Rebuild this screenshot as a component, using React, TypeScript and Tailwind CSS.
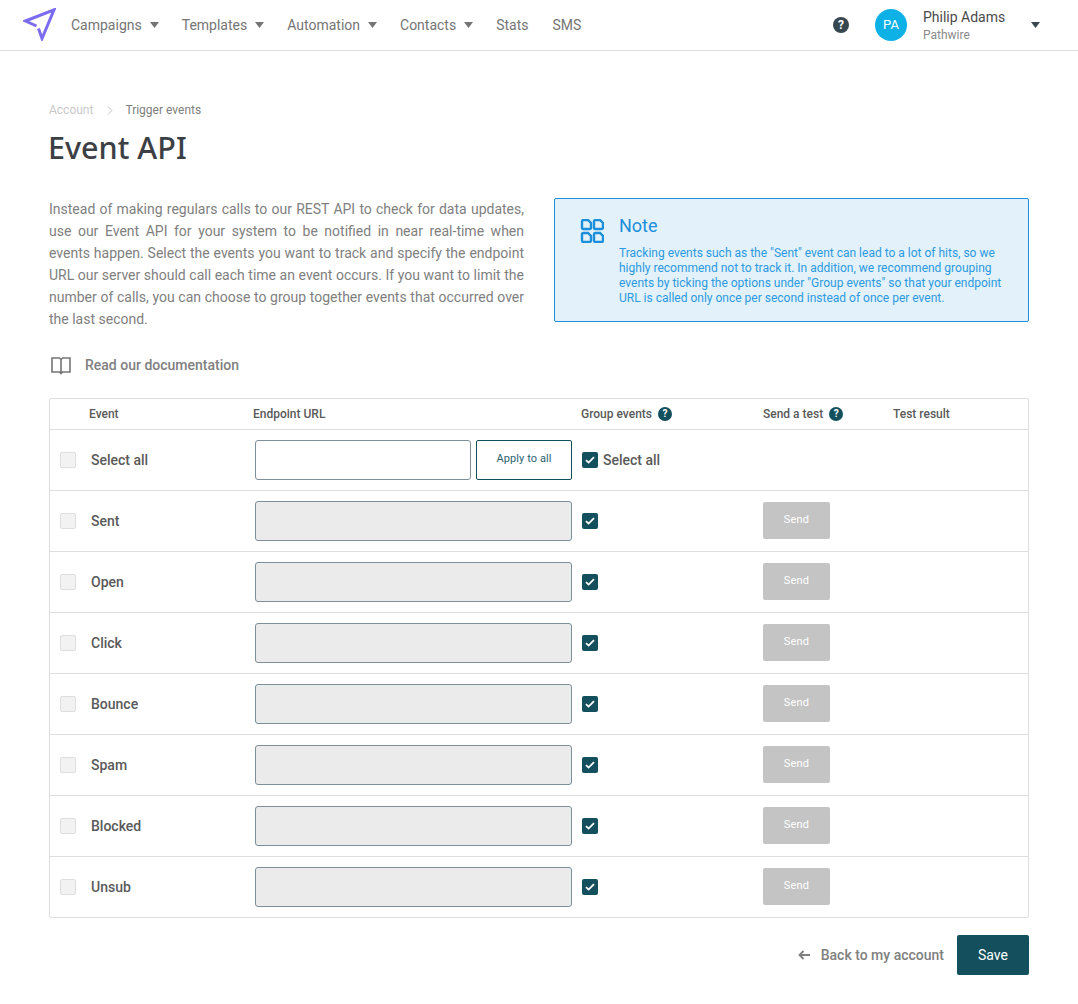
import React from "react";

const Caret = ({ c = "#757575" }: { c?: string }) => (
  <svg width="9" height="6" viewBox="0 0 9 6" className="shrink-0"><path d="M0 0h9L4.5 6z" fill={c} /></svg>
);

const Help = ({ size = 14, c = "#134f5c" }: { size?: number; c?: string }) => (
  <span className="inline-flex items-center justify-center rounded-full shrink-0 text-white font-bold" style={{ width: size, height: size, background: c, fontSize: size - 4, lineHeight: 1 }}>?</span>
);

const Check = () => (
  <span className="w-4 h-4 rounded-[2px] bg-[#134f5c] flex items-center justify-center shrink-0">
    <svg width="10" height="8" viewBox="0 0 10 8"><path d="M1 4.2l2.6 2.4L9 1.2" fill="none" stroke="#fff" strokeWidth="1.8" /></svg>
  </span>
);

const Nav = ({ label, caret = true, gap }: { label: string; caret?: boolean; gap: string }) => (
  <div className={`flex items-center gap-[8px] ${gap}`}>
    <span className="text-[14px] text-[#757575]">{label}</span>
    {caret && <Caret />}
  </div>
);

const Box = () => <span className="w-4 h-4 rounded-[2px] border border-[#dedede] bg-[#f2f2f2] shrink-0" />;

const rows = ["Sent", "Open", "Click", "Bounce", "Spam", "Blocked", "Unsub"];

const tile = (x: number, y: number) =>
  `M${x + 1.5} ${y}h4.5l3 3v4.500a1.500 1.500 0 0 1-1.500 1.500h-6a1.500 1.500 0 0 1-1.500-1.500v-6a1.500 1.500 0 0 1 1.500-1.500z`;

export default function App() {
  return (
    <div className="w-[1078px] h-[1004px] bg-white overflow-hidden font-['Roboto',sans-serif] text-[#444]">
      <header className="h-[51px] border-b border-[#dedede] flex items-center pl-[23px]">
        <svg width="33" height="33" viewBox="0 0 33 33" className="mr-[15px] mb-[1px] shrink-0">
          <path d="M13.500 18L2.500 13 31 1.800 19 30.500l-3.500-10" fill="none" stroke="#7c6cf0" strokeWidth="3" strokeLinejoin="miter" />
        </svg>
        <Nav label="Campaigns" gap="mr-[23px]" />
        <Nav label="Templates" gap="mr-[23px]" />
        <Nav label="Automation" gap="mr-[23px]" />
        <Nav label="Contacts" gap="mr-[23px]" />
        <Nav label="Stats" caret={false} gap="mr-[24px]" />
        <Nav label="SMS" caret={false} gap="" />
        <div className="ml-auto flex items-center">
          <Help size={16} c="#37474f" />
          <div className="w-8 h-8 rounded-full bg-[#0db1e6] text-white text-[13px] flex items-center justify-center ml-[26px]">PA</div>
          <div className="ml-4 w-[108px] flex flex-col pt-[1px]">
            <span className="text-[14px] leading-[18px] text-[#4a4a4a]">Philip Adams</span>
            <span className="text-[12px] leading-[17px] mt-[1px] text-[#8a8a8a]">Pathwire</span>
          </div>
          <span className="mr-[38px] mb-[1px] flex"><Caret c="#37474f" /></span>
        </div>
      </header>

      <main className="px-[49px]">
        <div className="flex items-center mt-[52px] text-[12px] leading-[14px]">
          <span className="text-[#c9c9c9]">Account</span>
          <svg width="6" height="9" viewBox="0 0 6 9" className="ml-[14px] mr-[12px]"><path d="M1 .5l4 4-4 4" fill="none" stroke="#c4c4c4" /></svg>
          <span className="text-[#808080]">Trigger events</span>
        </div>
        <h1 className="font-['Noto_Sans',sans-serif] font-medium text-[30.5px] leading-[44px] mt-[8px] -ml-[1px] text-[#3c3f44]">Event API</h1>

        <div className="flex justify-between mt-[29px]">
          <p className="w-[475px] text-[14px] leading-[22px] text-[#808080] text-justify">
            Instead of making regulars calls to our REST API to check for data updates, use our Event API for your system to be notified in near real-time when events happen. Select the events you want to track and specify the endpoint URL our server should call each time an event occurs. If you want to limit the number of calls, you can choose to group together events that occurred over the last second.
          </p>
          <div className="w-[475px] h-[124px] border border-[#1b8fdb] rounded-[2px] bg-[#e3f1fa] flex pl-[25px] pt-[16px]">
            <svg width="24" height="24" viewBox="0 0 24 24" className="mt-[4px] shrink-0" fill="none" stroke="#1b8fdb" strokeWidth="2.400">
              <path d={tile(2, 1)} /><path d={tile(14, 1)} /><path d={tile(2, 14)} /><path d={tile(14, 14)} />
            </svg>
            <div className="ml-[15px]">
              <div className="text-[18px] leading-[22px] text-[#1b8fdb]">Note</div>
              <div className="text-[12px] leading-[15px] text-[#2b9ae0] mt-[9px] w-[392px]">
                Tracking events such as the "Sent" event can lead to a lot of hits, so we highly recommend not to track it. In addition, we recommend grouping events by ticking the options under "Group events" so that your endpoint URL is called only once per second instead of once per event.
              </div>
            </div>
          </div>
        </div>

        <div className="flex items-center mt-[23px] h-[24px]">
          <svg width="22" height="20" viewBox="0 0 22 20" fill="none" stroke="#757575" strokeWidth="1.600" className="ml-[1px]">
            <path d="M11 4.500L9.500 3H2v14h7.500l1.500 1.500 1.500-1.500H20V3h-7.500zM11 4.500V18" />
          </svg>
          <span className="ml-[13px] text-[14px] font-medium text-[#808080]">Read our documentation</span>
        </div>

        <div className="mt-[21px] border border-[#dedede] rounded-[2px] w-[980px]">
          <div className="h-[31px] flex items-center border-b border-[#dedede] text-[12px] font-medium text-[#5a5a5a]">
            <span className="ml-[39px] w-[164px]">Event</span>
            <span className="w-[328px]">Endpoint URL</span>
            <span className="w-[182px] flex items-center gap-[6px]">Group events <Help /></span>
            <span className="w-[130px] flex items-center gap-[6px]">Send a test <Help /></span>
            <span>Test result</span>
          </div>
          <div className="h-[61px] flex items-center border-b border-[#dedede]">
            <span className="ml-[10px] flex"><Box /></span>
            <span className="ml-[15px] w-[164px] text-[14px] font-medium text-[#5a5a5a]">Select all</span>
            <span className="w-[216px] h-[40px] border border-[#7d8f99] rounded-[3px] bg-white" />
            <span className="ml-[5px] w-[96px] h-[40px] border border-[#134f5c] rounded-[2px] text-[11px] text-[#2a6270] flex items-center justify-center pb-[2px] tracking-[0.1px]">Apply to all</span>
            <span className="ml-[10px] flex"><Check /></span>
            <span className="ml-[5px] text-[14px] font-medium text-[#5a5a5a]">Select all</span>
          </div>
          {rows.map((r, i) => (
            <div key={r} className={i < rows.length - 1 ? "h-[61px] flex items-center border-b border-[#dedede]" : "h-[60px] flex items-center"}>
              <span className="ml-[10px] flex"><Box /></span>
              <span className="ml-[15px] w-[164px] text-[14px] font-medium text-[#5a5a5a]">{r}</span>
              <span className="w-[317px] h-[40px] border border-[#7d8f99] rounded-[3px] bg-[#ebebeb]" />
              <span className="ml-[10px] flex"><Check /></span>
              <span className="ml-[165px] mb-[2px] w-[67px] h-[37px] rounded-[2px] bg-[#c4c4c4] text-white text-[11px] flex items-center justify-center tracking-[0.2px]">Send</span>
            </div>
          ))}
        </div>

        <div className="flex justify-end items-center mt-[17px]">
          <svg width="12" height="10" viewBox="0 0 12 10" fill="none" stroke="#808080" strokeWidth="1.800"><path d="M12 5H1.500M5.500 1L1.500 5l4 4" /></svg>
          <span className="ml-[11px] text-[14px] font-medium text-[#808080]">Back to my account</span>
          <span className="ml-[13px] w-[72px] h-[40px] bg-[#134f5c] rounded-[2px] text-white text-[14px] flex items-center justify-center">Save</span>
        </div>
      </main>
    </div>
  );
}
